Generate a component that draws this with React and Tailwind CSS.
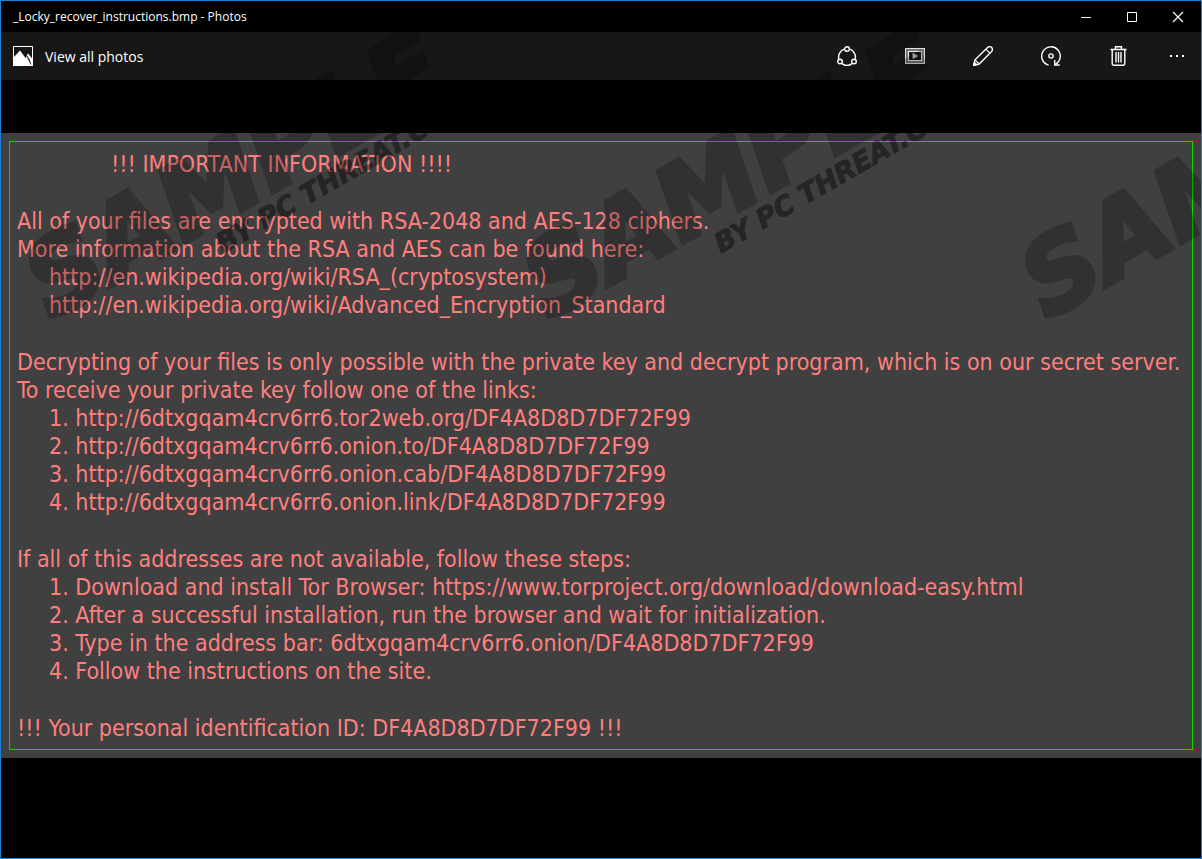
const uiFont = "font-['Open_Sans','Noto_Sans',sans-serif]";

const toolIcons = [
  {
    label: "Share",
    art: (
      <>
        <path d="M7.2 3.2A8.4 8.4 0 0 0 1.8 13M5 17.6a8.4 8.4 0 0 0 10 0M18.2 13a8.4 8.4 0 0 0-5.4-9.8" />
        <circle cx="10" cy="3" r="2.3" />
        <circle cx="3" cy="15.5" r="2.3" />
        <circle cx="17" cy="15.5" r="2.3" />
      </>
    ),
  },
  {
    label: "Slideshow",
    art: (
      <>
        <rect x="0.5" y="2.5" width="19" height="15" fill="#777" stroke="#ddd" strokeWidth="1" />
        <rect x="3.5" y="5.5" width="13" height="9" fill="#171717" stroke="#eee" strokeWidth="1" />
        <path d="M8 7.5v5l4.5-2.5z" fill="#bbb" stroke="#ddd" strokeWidth="0.8" />
      </>
    ),
  },
  {
    label: "Edit",
    art: (
      <>
        <path d="M0.8 19.2 2 13.8 14.6 1.5a2.7 2.7 0 0 1 4 4L6.2 18z" />
        <path d="m2 13.8 4.2 4.2M12.8 3.2l4 4" strokeWidth="1.1" />
        <path d="M0.8 19.2 1.4 16.6 3.4 18.6z" fill="#fff" />
      </>
    ),
  },
  {
    label: "Rotate",
    art: (
      <>
        <path d="M7.6 19.1A9.3 9.3 0 1 1 14.2 18.4" />
        <path d="M13.7 14v5h5" />
        <circle cx="10" cy="10" r="2.1" />
      </>
    ),
  },
  {
    label: "Delete",
    art: (
      <>
        <path d="M1.5 3.5h16M6.5 3V.8h6V3" />
        <path d="M3.2 3.5v14.3a1.5 1.5 0 0 0 1.5 1.5h9.6a1.5 1.5 0 0 0 1.5-1.5V3.5" />
        <path d="M7 6v10.5M9.5 6v10.5M12 6v10.5" />
      </>
    ),
  },
];

function ToolButton({ label, art }) {
  return (
    <button type="button" aria-label={label} className="flex h-12 w-[68px] items-center justify-center">
      <svg viewBox="0 0 20 20" className="size-5" fill="none" stroke="#fff" strokeWidth="1.4">
        {art}
      </svg>
    </button>
  );
}

function CaptionButton({ label, children }) {
  return (
    <button type="button" aria-label={label} className="flex h-[31px] w-[46px] items-center justify-center">
      <svg viewBox="0 0 10 10" className="size-[10px] overflow-visible" fill="none" stroke="#fff">
        {children}
      </svg>
    </button>
  );
}

const marks = [
  { x: 53, byline: true },
  { x: 551, byline: true },
  { x: 1049, byline: false },
];

function Watermark() {
  return (
    <svg
      aria-hidden="true"
      className="pointer-events-none absolute inset-0 size-full font-['DejaVu_Sans',sans-serif] font-bold italic"
    >
      {marks.map(({ x, byline }) => (
        <g key={x} transform={`translate(${x} 320) rotate(-30)`}>
          <text x="-2" y="-2" fontSize="102" stroke="#000" strokeWidth="5" opacity="0.22">SAMPLE</text>
          {byline && (
            <text x="180" y="26" fontSize="27" stroke="#000" strokeWidth="1" opacity="0.42">BY PC THREAT.COM</text>
          )}
        </g>
      ))}
    </svg>
  );
}

function Link({ href }) {
  return <a href={href}>{href}</a>;
}

export default function App() {
  return (
    <div className="relative flex min-h-screen flex-col overflow-hidden border border-[#1883d7] bg-black text-white">
      <header className={uiFont}>
        <div className="flex h-[31px] items-center justify-between">
          <h1 className="pl-3 text-[12px]">_Locky_recover_instructions.bmp - Photos</h1>
          <div className="flex">
            <CaptionButton label="Minimize"><path d="M0 5.5h10" /></CaptionButton>
            <CaptionButton label="Maximize"><path d="M.5.5h9v9h-9z" /></CaptionButton>
            <CaptionButton label="Close"><path d="m0 0 10 10M10 0 0 10" strokeWidth="1.2" /></CaptionButton>
          </div>
        </div>
        <div className="flex h-12 items-center justify-between bg-[#171717]">
          <button type="button" className="flex items-center gap-3 pl-3 text-[14px]">
            <svg viewBox="0 0 20 20" className="size-5">
              <path d="M.5.5h19v19H.5z" fill="#171717" stroke="#fff" />
              <path d="M0 12 7 4.5 12.5 12l2-4 .5-.5 5 6V20H0z" fill="#fff" />
              <path d="m12.8 8.2 5 10.2-1.4-5z" fill="#171717" stroke="#171717" strokeWidth=".5" />
            </svg>
            View all photos
          </button>
          <div className="flex">
            {toolIcons.map((t) => (
              <ToolButton key={t.label} {...t} />
            ))}
            <button type="button" aria-label="More" className="flex h-12 w-12 items-center justify-center">
              <svg viewBox="0 0 14 2" className="h-[2px] w-[14px]" fill="#fff">
                <path d="M0 0h2v2H0zM6 0h2v2H6zM12 0h2v2h-2z" />
              </svg>
            </button>
          </div>
        </div>
      </header>

      <main className="mt-[53px] bg-[#404040] p-2 font-['DejaVu_Sans_Condensed','DejaVu_Sans',sans-serif] text-[23px] leading-[28px] text-[#ff7f7f]">
        <div className="flex flex-col gap-[29px] border border-[#00dc00] px-[7px] pt-2 pb-[7px]">
          <h2 className="pl-[94px]">!!! IMPORTANT INFORMATION !!!!</h2>
          <div>
            <p>All of your files are encrypted with RSA-2048 and AES-128 ciphers.</p>
            <p>More information about the RSA and AES can be found here:</p>
            <p className="pl-8"><Link href="http://en.wikipedia.org/wiki/RSA_(cryptosystem)" /></p>
            <p className="pl-8"><Link href="http://en.wikipedia.org/wiki/Advanced_Encryption_Standard" /></p>
          </div>
          <div>
            <p>Decrypting of your files is only possible with the private key and decrypt program, which is on our secret server.</p>
            <p>To receive your private key follow one of the links:</p>
            <p className="pl-8">1. <Link href="http://6dtxgqam4crv6rr6.tor2web.org/DF4A8D8D7DF72F99" /></p>
            <p className="pl-8">2. <Link href="http://6dtxgqam4crv6rr6.onion.to/DF4A8D8D7DF72F99" /></p>
            <p className="pl-8">3. <Link href="http://6dtxgqam4crv6rr6.onion.cab/DF4A8D8D7DF72F99" /></p>
            <p className="pl-8">4. <Link href="http://6dtxgqam4crv6rr6.onion.link/DF4A8D8D7DF72F99" /></p>
          </div>
          <div>
            <p>If all of this addresses are not available, follow these steps:</p>
            <p className="pl-8">1. Download and install Tor Browser: <Link href="https://www.torproject.org/download/download-easy.html" /></p>
            <p className="pl-8">2. After a successful installation, run the browser and wait for initialization.</p>
            <p className="pl-8">3. Type in the address bar: 6dtxgqam4crv6rr6.onion/DF4A8D8D7DF72F99</p>
            <p className="pl-8">4. Follow the instructions on the site.</p>
          </div>
          <p>!!! Your personal identification ID: DF4A8D8D7DF72F99 !!!</p>
        </div>
      </main>
      <Watermark />
    </div>
  );
}
